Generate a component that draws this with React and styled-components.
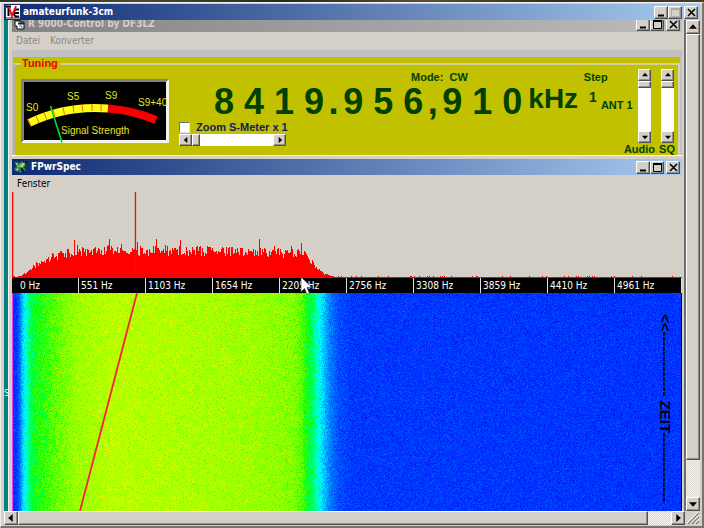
import React, { useEffect, useRef, useState } from 'react';
import styled, { createGlobalStyle, css } from 'styled-components';

const FREQ_GROUPS = ['8419', '956', '910'];
const SEPARATORS = ['.', ','];
const AXIS_LABELS = ['0', '551', '1103', '1654', '2205', '2756', '3308', '3859', '4410', '4961'];

// Small seeded generator so the noise looks the same on every render
const createRandom = (seed) => {
  let s = seed;
  return () => {
    s = (s * 1664525 + 1013904223) % 4294967296;
    return s / 4294967296;
  };
};

const interpolate = (stops, x) => {
  if (x <= stops[0][0]) return stops[0][1];
  for (let i = 1; i < stops.length; i++) {
    if (x <= stops[i][0]) {
      const [x0, y0] = stops[i - 1];
      const [x1, y1] = stops[i];
      return y0 + ((y1 - y0) * (x - x0)) / (x1 - x0);
    }
  }
  return stops[stops.length - 1][1];
};

const SPECTRUM_W = 670;
const SPECTRUM_H = 86;
const ENVELOPE = [[0, 3], [3, 1], [8, 2], [14, 5], [20, 10], [28, 15], [38, 20], [50, 24], [65, 27],
  [140, 28], [200, 27], [290, 25], [298, 18], [304, 10], [312, 4], [324, 1], [670, 1]];

const buildSpectrum = () => {
  const random = createRandom(77);
  let d = `M0 ${SPECTRUM_H}`;
  for (let x = 0; x < SPECTRUM_W; x++) {
    const base = interpolate(ENVELOPE, x);
    const r = random();
    const spike = random() > 0.9 ? random() * 0.35 : 0;
    const h = base > 2 ? base * (0.8 + 0.36 * r + spike) : base + (random() > 0.9 ? 1 : 0);
    const y = Math.round(SPECTRUM_H - h);
    d += `V${y}H${x + 1}`;
  }
  return `${d}V${SPECTRUM_H}Z`;
};

const SPECTRUM_PATH = buildSpectrum();

// Signal level across the waterfall, 0 = noise floor
const LEVELS = [[0, 0.14], [4, 0.15], [6, 0.2], [8, 0.28], [10, 0.38], [13, 0.46], [17, 0.54],
  [22, 0.6], [30, 0.63], [45, 0.68], [65, 0.74], [100, 0.78], [180, 0.76], [240, 0.74], [280, 0.71],
  [289, 0.67], [295, 0.6], [301, 0.54], [307, 0.45], [312, 0.37], [318, 0.27], [326, 0.19],
  [340, 0.15], [670, 0.14]];
const RED = [[0, 0], [0.6, 0], [0.7, 130], [0.78, 185], [0.9, 255]];
const GREEN = [[0, 0], [0.06, 20], [0.14, 48], [0.3, 140], [0.45, 255], [0.9, 255]];
const BLUE = [[0, 150], [0.08, 245], [0.14, 255], [0.45, 255], [0.6, 20], [0.65, 0]];

const TitleButtons = ({ dimMax }) => (
  <ButtonGroup>
    <CaptionButton type="button" aria-label="Minimize">
      <svg width="9" height="9"><path d="M1 7.500h6" stroke="#000" strokeWidth="2" /></svg>
    </CaptionButton>
    <CaptionButton type="button" aria-label="Maximize" disabled={dimMax}>
      <svg width="9" height="9">
        <path d="M.5 1v7.500h8V1M0 1h9" fill="none" stroke={dimMax ? '#aaa' : '#000'} strokeWidth="1" />
        <path d="M0 1h9" stroke={dimMax ? '#aaa' : '#000'} strokeWidth="2" />
      </svg>
    </CaptionButton>
    <CaptionButton type="button" aria-label="Close" $apart>
      <svg width="9" height="9"><path d="M1 1l7 7M8 1l-7 7" stroke="#000" strokeWidth="1.600" /></svg>
    </CaptionButton>
  </ButtonGroup>
);

const ARROWS = {
  up: 'M0 5L3.500 1L7 5Z',
  down: 'M0 2L3.500 6L7 2Z',
  left: 'M5 0L1 3.500L5 7Z',
  right: 'M2 0L6 3.500L2 7Z'
};

const Arrow = ({ dir, large }) => (
  <ArrowButton type="button" aria-label={`Scroll ${dir}`} $large={large}>
    <svg width={large ? 8 : 6} height={large ? 8 : 6} viewBox="0 0 7 7"><path d={ARROWS[dir]} /></svg>
  </ArrowButton>
);

const TvcIcon = () => (
  <svg width="14" height="14" viewBox="0 0 14 14">
    <rect width="14" height="14" fill="#fff" />
    <path d="M0 1.500h5M2.500 1v10M13 4.500h-3.500l-1.500 2v3l1.500 2H13M9 8h4" fill="none" stroke="#000" strokeWidth="2" />
    <path d="M3 2l3 9 4-10" fill="none" stroke="#e8101c" strokeWidth="2" />
    <path d="M0 13h14" stroke="#222" strokeWidth="1" />
  </svg>
);

const FormIcon = () => (
  <svg width="11" height="11" viewBox="0 0 11 11">
    <path d="M1 1h5v2h4v7H3V7H1z" fill="#fff" stroke="#111" />
    <path d="M1 1.500h5M4 4.500h6" stroke="#123" strokeWidth="2" />
    <path d="M5 7h3v2" fill="none" stroke="#1a8e8e" />
  </svg>
);

const SpecIcon = () => (
  <svg width="14" height="14" viewBox="0 0 14 14">
    <path d="M1 3l3-1 2 3 1-4 2 1v3l3-2 1 2-3 2 2 3-2 1-2-2-1 4-2-1-1-3-3 2-1-2 3-3z" fill="#128b5d" />
    <path d="M1 2l3 2-1 2zM6 6l4-5 2 1-4 6zM2 9l3-1-2 4z" fill="#e3cf2e" />
    <path d="M9 2h3v3M7 8l3 4" fill="none" stroke="#111" strokeWidth="1.500" />
    <path d="M3 6l3 1M6 3v3" stroke="#5be3d5" />
  </svg>
);

const SignalMeter = () => (
  <MeterFrame>
    <svg width="142" height="58" viewBox="24 82 142 58" overflow="visible" role="img" aria-label="Signal Strength">
      <path d="M29 123A152 152 0 0 1 108 108.500" fill="none" stroke="#ffff14" strokeWidth="8" />
      <path d="M108 108.500A152 152 0 0 1 156 120" fill="none" stroke="#f80000" strokeWidth="8" />
      <path
        d="M28 119l3 7M36 116l3 7M44 113l3 7M53 110l2 7M63 107.500l1.500 7M73 105.500l1 7M82 104.500l1 7M92 104v7M101 104v7"
        stroke="#e86a10" strokeWidth="1"
      />
      <path d="M50.500 106L62 142.500" stroke="#00e020" strokeWidth="1.600" />
      <MeterText x="26" y="111">S0</MeterText>
      <MeterText x="67" y="100">S5</MeterText>
      <MeterText x="105" y="99">S9</MeterText>
      <MeterText x="138" y="106">S9+40</MeterText>
      <MeterText x="61" y="134">Signal Strength</MeterText>
    </svg>
  </MeterFrame>
);

const Waterfall = () => {
  const canvasRef = useRef(null);

  useEffect(() => {
    const canvas = canvasRef.current;
    const ctx = canvas.getContext('2d');
    const { width, height } = canvas;
    const image = ctx.createImageData(width, height);
    const random = createRandom(4242);

    for (let y = 0; y < height; y++) {
      for (let x = 0; x < width; x++) {
        const n = random() + random() + random() - 1.5;
        const level = interpolate(LEVELS, x) + n * 0.065;
        const i = (y * width + x) * 4;
        image.data[i] = interpolate(RED, level);
        image.data[i + 1] = interpolate(GREEN, level);
        image.data[i + 2] = interpolate(BLUE, level);
        image.data[i + 3] = 255;
      }
    }
    ctx.putImageData(image, 0, 0);

    // left edge marker
    ctx.fillStyle = '#f53cf0';
    ctx.fillRect(0, 0, 1, height);
    ctx.fillStyle = '#000';
    ctx.fillRect(width - 1, 0, 1, height);

    // drifting carrier
    ctx.strokeStyle = '#f8203c';
    ctx.lineWidth = 1.8;
    ctx.beginPath();
    ctx.moveTo(125, 0);
    ctx.lineTo(68, height);
    ctx.stroke();
  }, []);

  return (
    <WaterfallArea>
      <canvas ref={canvasRef} width={670} height={218} />
      <TimeLabel>{'<<------------- ZEIT--------------'}</TimeLabel>
    </WaterfallArea>
  );
};

const App = () => {
  const [zoomed, setZoomed] = useState(false);
  const [zoom, setZoom] = useState(0);
  const [audio, setAudio] = useState(0);
  const [squelch, setSquelch] = useState(0);

  return (
    <Desktop>
      <GlobalStyle />
      <OuterWindow>
        <TitleBar>
          <TvcIcon />
          <Title>amateurfunk-3cm</Title>
          <TitleButtons dimMax />
        </TitleBar>

        <Client>
          <Backdrop><span>S</span></Backdrop>
          <Inner>
            <ClippedBar>
              <TitleBar $inactive>
                <FormIcon />
                <Title>R 9000-Control by DF3LZ</Title>
                <TitleButtons />
              </TitleBar>
            </ClippedBar>
            <MenuBar $disabled>
              <MenuItem type="button" disabled>Datei</MenuItem>
              <MenuItem type="button" disabled>Konverter</MenuItem>
            </MenuBar>

            <TuningPanel>
              <Group>
                <legend>Tuning</legend>
                <GroupBody>
                  <SignalMeter />
                  <Receiver>
                    <StatusRow>
                      <span>Mode:&nbsp; CW</span>
                      <span>Step</span>
                    </StatusRow>
                    <Frequency>
                      {FREQ_GROUPS.map((group, i) => (
                        <React.Fragment key={group}>
                          {i > 0 && <Separator>{SEPARATORS[i - 1]}</Separator>}
                          <Digits>
                            {group.split('').map((digit, j) => <span key={j}>{digit}</span>)}
                          </Digits>
                        </React.Fragment>
                      ))}
                      <Unit>kHz</Unit>
                      <StepValue>1</StepValue>
                      <Antenna>ANT 1</Antenna>
                    </Frequency>
                    <CheckLabel>
                      <input type="checkbox" checked={zoomed} onChange={(e) => setZoomed(e.target.checked)} />
                      Zoom S-Meter x 1
                    </CheckLabel>
                    <ZoomScroll>
                      <Arrow dir="left" />
                      <HRange
                        type="range" min="0" max="100" value={zoom} aria-label="Zoom"
                        onChange={(e) => setZoom(Number(e.target.value))}
                      />
                      <Arrow dir="right" />
                    </ZoomScroll>
                  </Receiver>
                  <Levels>
                    <Level>
                      <VScroll $inset>
                        <Arrow dir="up" />
                        <VRange
                          id="audio" type="range" min="0" max="100" value={audio}
                          onChange={(e) => setAudio(Number(e.target.value))}
                        />
                        <Arrow dir="down" />
                      </VScroll>
                      <label htmlFor="audio">Audio</label>
                    </Level>
                    <Level>
                      <VScroll>
                        <Arrow dir="up" />
                        <VRange
                          id="squelch" type="range" min="0" max="100" value={squelch}
                          onChange={(e) => setSquelch(Number(e.target.value))}
                        />
                        <Arrow dir="down" />
                      </VScroll>
                      <label htmlFor="squelch">SQ</label>
                    </Level>
                  </Levels>
                </GroupBody>
              </Group>
            </TuningPanel>

            <SpecWindow>
              <TitleBar>
                <SpecIcon />
                <Title>FPwrSpec</Title>
                <TitleButtons />
              </TitleBar>
              <MenuBar>
                <MenuItem type="button">Fenster</MenuItem>
              </MenuBar>
              <Spectrum viewBox={`0 0 ${SPECTRUM_W} ${SPECTRUM_H}`} preserveAspectRatio="none">
                <path d={SPECTRUM_PATH} fill="#ff0000" shapeRendering="crispEdges" />
                <path d="M0 0h1.300v86H0zM122.800 0h1.300v86h-1.300z" fill="#f80808" />
              </Spectrum>
              <Axis>
                {AXIS_LABELS.map((hz) => <AxisCell key={hz}>{hz} Hz</AxisCell>)}
                <Pointer width="13" height="20" viewBox="0 0 13 20">
                  <path d="M1 1v15l3.500-3.500L7 18.500l2.500-1L7 11.500h5z" fill="#fff" stroke="#333" strokeWidth=".6" />
                </Pointer>
              </Axis>
              <Waterfall />
            </SpecWindow>
          </Inner>

          <SideScroll>
            <Arrow dir="up" large />
            <ScrollThumb $grow={426} />
            <ScrollTrack $grow={37} />
            <Arrow dir="down" large />
          </SideScroll>
        </Client>

        <BottomRow>
          <BottomScroll>
            <Arrow dir="left" large />
            <ScrollThumb $grow={632} />
            <ScrollTrack $grow={23} />
            <Arrow dir="right" large />
          </BottomScroll>
          <Grip width="15" height="14" viewBox="0 0 15 14">
            <path d="M3 13L14 2M7 13l7-7M11 13l3-3" stroke="#888" strokeWidth="1.500" />
            <path d="M2 12L13 1M6 12l8-8M10 12l4-4" stroke="#fff" strokeWidth="1" />
          </Grip>
        </BottomRow>
      </OuterWindow>
    </Desktop>
  );
};

const GlobalStyle = createGlobalStyle`
  * {
    box-sizing: border-box;
  }

  body {
    margin: 0;
    background: #d4d0c8;
    font-family: "DejaVu Sans Condensed", "DejaVu Sans", sans-serif;
    font-size: 10px;
    color: #000;
  }

  button, input {
    font: inherit;
    margin: 0;
    padding: 0;
  }

  svg, canvas {
    display: block;
    flex-shrink: 0;
  }
`;

const raised = css`
  background: #d4d0c8;
  border: 1px solid;
  border-color: #fff #505050 #505050 #fff;
  box-shadow: inset -1px -1px 0 #909088;
`;

const Desktop = styled.div`
  min-height: 100vh;
  display: flex;
  flex-direction: column;
  padding-top: 2px;
  background: linear-gradient(90deg, #2c3527, #4a4a34 20%, #23291f 40%, #5a5038 60%, #2b2f22 80%, #423d2c);
`;

const OuterWindow = styled.div`
  flex: 1;
  display: flex;
  flex-direction: column;
  background: #d4d0c8;
  border: solid;
  border-width: 1px 2px 2px 1px;
  border-color: #f4f0ec #77736e #77736e #f4f0ec;
  padding: 1px 2px 1px 3px;
`;

const TitleBar = styled.div`
  height: 16px;
  display: flex;
  align-items: center;
  gap: 3px;
  padding: 0 2px;
  flex-shrink: 0;
  color: ${({ $inactive }) => ($inactive ? '#d4d0c8' : '#fff')};
  background: ${({ $inactive }) =>
    $inactive ? 'linear-gradient(90deg, #838383, #bcbcbc)' : 'linear-gradient(90deg, #0e2a72, #a6caf0)'};
`;

const Title = styled.span`
  flex: 1;
  font-weight: bold;
  line-height: 16px;
  white-space: nowrap;
`;

const ButtonGroup = styled.div`
  display: flex;
`;

const CaptionButton = styled.button`
  ${raised}
  width: 14px;
  height: 13px;
  display: flex;
  align-items: center;
  justify-content: center;
  margin-left: ${({ $apart }) => ($apart ? '2px' : '0')};
`;

const Client = styled.div`
  flex: 1;
  display: flex;
`;

const Backdrop = styled.div`
  width: 4px;
  display: flex;
  flex-direction: column;
  justify-content: flex-end;
  padding-bottom: 112px;
  background: #008080;
  color: #e8f0f0;
  font-size: 9px;
  line-height: 12px;
`;

const Inner = styled.div`
  flex: 1;
  min-width: 0;
  display: flex;
  flex-direction: column;
  background: #d4d0c8;
  border-left: 1px solid #f4f0ec;
  border-right: 1px solid #6b6b68;
  padding: 0 2px 0 3px;
`;

const ClippedBar = styled.div`
  height: 12px;
  display: flex;
  flex-direction: column;
  justify-content: flex-end;
  overflow: hidden;
`;

const MenuBar = styled.div`
  display: flex;
  gap: 10px;
  height: ${({ $disabled }) => ($disabled ? '18px' : '17px')};
  padding-left: ${({ $disabled }) => ($disabled ? '4px' : '5px')};
  background: #d4d0c8;
`;

const MenuItem = styled.button`
  border: 0;
  background: none;
  color: #000;
  line-height: 16px;

  &:disabled {
    color: #8a8883;
  }
`;

const TuningPanel = styled.div`
  background: #c1c100;
  border: solid #c0c0c0;
  border-width: 7px 2px 0 1px;
`;

const Group = styled.fieldset`
  margin: 0;
  min-width: 0;
  height: 98px;
  padding: 0 3px 0 6px;
  border: 2px solid;
  border-color: #d2d09a #d4d0c8 #d2d09a #b5b3a0;
  border-bottom: 0;
  font-family: "Liberation Sans", Arial, sans-serif;
  font-size: 11px;
  font-weight: bold;

  legend {
    padding: 0 2px 0 1px;
    color: #f00000;
    line-height: 13px;
  }
`;

const GroupBody = styled.div`
  display: flex;
  align-items: flex-start;
`;

const MeterFrame = styled.div`
  margin-top: 9px;
  background: #000;
  border: solid;
  border-width: 3px;
  border-color: #808080 #f4f4e8 #f4f4e8 #808080;
`;

const MeterText = styled.text`
  fill: #e6e620;
  font-family: "Liberation Sans", Arial, sans-serif;
  font-size: 10px;
  font-weight: normal;
`;

const Receiver = styled.div`
  flex: 1;
  min-width: 0;
  padding-left: 10px;
  color: #004000;
`;

const StatusRow = styled.div`
  display: flex;
  gap: 116px;
  padding-left: 232px;
  line-height: 14px;
  white-space: nowrap;
`;

const Frequency = styled.div`
  display: flex;
  padding-left: 35px;
  font-size: 36px;
  line-height: 36px;
  white-space: nowrap;
`;

const Digits = styled.div`
  display: flex;
  gap: 10px;
`;

const Separator = styled.span`
  flex-shrink: 0;
  width: 19px;
  text-align: center;
`;

const Unit = styled.span`
  margin-left: 6px;
  font-size: 28px;
  line-height: 30px;
`;

const StepValue = styled.span`
  margin-left: 11px;
  font-size: 14px;
  line-height: 26px;
`;

const Antenna = styled.span`
  margin-left: 4px;
  font-size: 11px;
  line-height: 42px;
  height: 36px;
`;

const CheckLabel = styled.label`
  display: flex;
  align-items: center;
  gap: 6px;
  height: 14px;
  color: #10205c;
  line-height: 14px;

  input {
    appearance: none;
    width: 11px;
    height: 11px;
    background: #fff;
    border: 1px solid;
    border-color: #707070 #e8e8e0 #e8e8e0 #707070;
  }

  input:checked {
    background: #202020;
  }
`;

const ZoomScroll = styled.div`
  display: flex;
  width: 107px;
  height: 12px;
  background: #fff;
`;

const ArrowButton = styled.button`
  ${raised}
  flex-shrink: 0;
  width: ${({ $large }) => ($large ? '14px' : '13px')};
  height: ${({ $large }) => ($large ? '14px' : '12px')};
  display: flex;
  align-items: center;
  justify-content: center;
`;

const rangeBase = css`
  appearance: none;
  flex: 1;
  min-width: 0;
  min-height: 0;
  background: #fff;
`;

const HRange = styled.input`
  ${rangeBase}
  height: 12px;

  &::-webkit-slider-thumb {
    appearance: none;
    ${raised}
    width: 8px;
    height: 12px;
  }
`;

const VRange = styled.input`
  ${rangeBase}
  writing-mode: vertical-lr;
  width: 13px;

  &::-webkit-slider-thumb {
    appearance: none;
    ${raised}
    width: 13px;
    height: 7px;
  }
`;

const Levels = styled.div`
  display: flex;
  gap: 4px;
  margin-top: -1px;
  color: #004000;
`;

const Level = styled.div`
  display: flex;
  flex-direction: column;
  align-items: flex-end;

  label {
    line-height: 12px;
  }
`;

const VScroll = styled.div`
  display: flex;
  flex-direction: column;
  width: 13px;
  height: 74px;
  margin-right: ${({ $inset }) => ($inset ? '4px' : '1px')};
`;

const SpecWindow = styled.div`
  flex: 1;
  display: flex;
  flex-direction: column;
  border-top: 1px solid #fff;
  padding-top: 3px;
`;

const Spectrum = styled.svg`
  width: 100%;
  height: 86px;
`;

const Axis = styled.div`
  position: relative;
  display: flex;
  height: 15px;
  background: #000;
  color: #fff;
`;

const AxisCell = styled.span`
  width: 10%;
  padding-left: 2px;
  border-right: 1px solid #e0e0e0;
  line-height: 16px;
  white-space: nowrap;

  &:first-child {
    padding-left: 8px;
  }
`;

const Pointer = styled.svg`
  position: absolute;
  z-index: 1;
  left: 43%;
  top: -2px;
`;

const WaterfallArea = styled.div`
  position: relative;
  flex: 1;
  min-height: 218px;

  canvas {
    width: 100%;
    height: 100%;
    image-rendering: pixelated;
  }
`;

const TimeLabel = styled.span`
  position: absolute;
  top: 21px;
  right: 8px;
  writing-mode: vertical-rl;
  font-family: "Liberation Sans", Arial, sans-serif;
  font-size: 15px;
  font-weight: bold;
  line-height: 17px;
  white-space: nowrap;
`;

const SideScroll = styled.div`
  display: flex;
  flex-direction: column;
  width: 15px;
  border-left: 1px solid #2f8f88;
`;

const ScrollThumb = styled.div`
  ${raised}
  flex: ${({ $grow }) => $grow} 1 0;
`;

const ScrollTrack = styled.div`
  flex: ${({ $grow }) => $grow} 1 0;
  background: repeating-conic-gradient(#f4f2ee 0 25%, #dcd9d2 0 50%) 0 0 / 2px 2px;
`;

const BottomRow = styled.div`
  display: flex;
`;

const BottomScroll = styled.div`
  flex: 1;
  display: flex;
`;

const Grip = styled.svg`
  background: #d4d0c8;
`;

export default App;
